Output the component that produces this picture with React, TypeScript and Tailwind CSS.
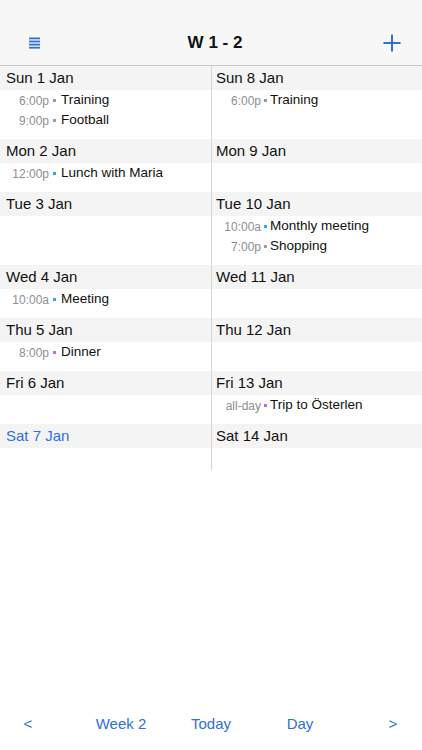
import React from "react";

type Ev = { time: string; title: string; dot: string };
type Day = { label: string; events: Ev[]; today?: boolean };

const GRAY = "bg-[#9a9aa0]";
const BLUE = "bg-[#3aa3e0]";
const PURPLE = "bg-[#c567d8]";

const rows: { left: Day; right: Day; h: string }[] = [
  {
    left: {
      label: "Sun 1 Jan",
      events: [
        { time: "6:00p", title: "Training", dot: GRAY },
        { time: "9:00p", title: "Football", dot: GRAY },
      ],
    },
    right: { label: "Sun 8 Jan", events: [{ time: "6:00p", title: "Training", dot: GRAY }] },
    h: "h-[49px]",
  },
  {
    left: { label: "Mon 2 Jan", events: [{ time: "12:00p", title: "Lunch with Maria", dot: BLUE }] },
    right: { label: "Mon 9 Jan", events: [] },
    h: "h-[29px]",
  },
  {
    left: { label: "Tue 3 Jan", events: [] },
    right: {
      label: "Tue 10 Jan",
      events: [
        { time: "10:00a", title: "Monthly meeting", dot: BLUE },
        { time: "7:00p", title: "Shopping", dot: GRAY },
      ],
    },
    h: "h-[49px]",
  },
  {
    left: { label: "Wed 4 Jan", events: [{ time: "10:00a", title: "Meeting", dot: BLUE }] },
    right: { label: "Wed 11 Jan", events: [] },
    h: "h-[29px]",
  },
  {
    left: { label: "Thu 5 Jan", events: [{ time: "8:00p", title: "Dinner", dot: PURPLE }] },
    right: { label: "Thu 12 Jan", events: [] },
    h: "h-[29px]",
  },
  {
    left: { label: "Fri 6 Jan", events: [] },
    right: { label: "Fri 13 Jan", events: [{ time: "all-day", title: "Trip to Österlen", dot: PURPLE }] },
    h: "h-[29px]",
  },
  {
    left: { label: "Sat 7 Jan", events: [], today: true },
    right: { label: "Sat 14 Jan", events: [] },
    h: "h-[22px]",
  },
];

function Cell({ day, side, h }: { day: Day; side: "l" | "r"; h: string }) {
  const isLeft = side === "l";
  return (
    <div className={isLeft ? "border-r border-[#d6d6d6]" : ""}>
      <div
        className={`h-[24px] flex items-center bg-[#f4f4f4] text-[15px] ${isLeft ? "pl-[6px]" : "pl-[4px]"} ${
          day.today ? "text-[#2f6fdc]" : "text-[#111]"
        }`}
      >
        {day.label}
      </div>
      <div className={`${h} bg-white`}>
        {day.events.map((e) => (
          <div key={e.title} className="h-[20px] flex items-center pt-[1px]">
            <span className="w-[49px] text-right text-[12px] text-[#8e8e93]">{e.time}</span>
            <span
              className={`w-[3px] h-[3px] ${e.dot} ${isLeft ? "ml-[4px] mr-[5px]" : "ml-[3px] mr-[3px]"}`}
            />
            <span className="text-[13.5px] text-[#111]">{e.title}</span>
          </div>
        ))}
      </div>
    </div>
  );
}

export default function App() {
  return (
    <div
      className="h-[750px] w-[422px] flex flex-col bg-white overflow-hidden"
      style={{ fontFamily: '"Liberation Sans", Arial, sans-serif' }}
    >
      {/* nav bar */}
      <div className="h-[66px] bg-[#f7f7f7] border-b border-[#c8c8c8] flex items-end">
        <div className="h-[45px] w-full flex items-center">
          <div className="flex-1 pl-[29px]">
            <svg width="12" height="12" viewBox="0 0 12 12" className="mt-[1px]">
              <rect x="0" y="0.5" width="11" height="1.8" fill="#2f6fdc" />
              <rect x="0" y="3.6" width="11" height="1.8" fill="#2f6fdc" />
              <rect x="0" y="6.7" width="11" height="1.8" fill="#2f6fdc" />
              <rect x="0" y="9.8" width="11" height="1.8" fill="#2f6fdc" />
            </svg>
          </div>
          <div className="text-[17px] font-bold text-[#111]">W 1 - 2</div>
          <div className="flex-1 flex justify-end pr-[21px]">
            <svg width="18" height="18" viewBox="0 0 18 18">
              <path d="M9 0.5V17.5M0.5 9H17.5" stroke="#2f6fdc" strokeWidth="2" />
            </svg>
          </div>
        </div>
      </div>

      {/* week grid */}
      <div className="grid grid-cols-[212px_1fr]">
        {rows.map((r) => (
          <React.Fragment key={r.left.label}>
            <Cell day={r.left} side="l" h={r.h} />
            <Cell day={r.right} side="r" h={r.h} />
          </React.Fragment>
        ))}
      </div>

      <div className="flex-1" />

      {/* toolbar */}
      <div className="h-[52px] flex items-center text-[15px] text-[#2f6fdc] pt-[1px]">
        <div className="w-[56px] text-center">&lt;</div>
        <div className="w-[130px] text-center">Week 2</div>
        <div className="w-[50px] text-center">Today</div>
        <div className="w-[128px] text-center">Day</div>
        <div className="w-[58px] text-center">&gt;</div>
      </div>
    </div>
  );
}
